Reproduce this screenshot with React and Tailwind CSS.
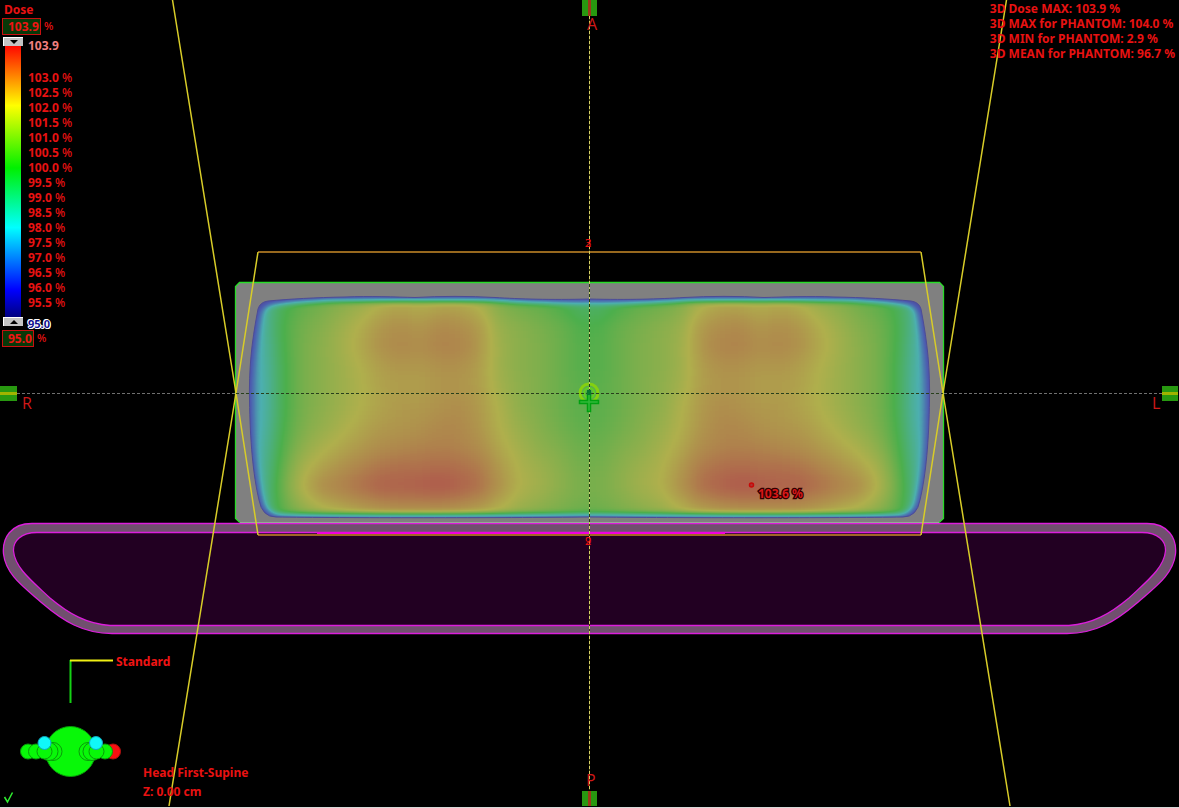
import React, { useState } from "react";

const scaleLabels = [
  "103.0", "102.5", "102.0", "101.5", "101.0", "100.5", "100.0", "99.5",
  "99.0", "98.5", "98.0", "97.5", "97.0", "96.5", "96.0", "95.5",
];

const stats = [
  "3D Dose MAX: 103.9 %",
  "3D MAX for PHANTOM: 104.0 %",
  "3D MIN for PHANTOM: 2.9 %",
  "3D MEAN for PHANTOM: 96.7 %",
];

// Dose in percent, from the lateral edge to the central axis, 20 units apart
const doseRows = [
  [97.8, 99.5, 100.1, 100.4, 100.8, 101.1, 101.4, 101.6, 101.5, 101.6, 101.6, 101.3, 100.6, 100.3, 100.1, 99.9, 99.3],
  [98.0, 99.7, 100.4, 100.8, 101.2, 101.6, 102.1, 102.3, 102.1, 102.3, 102.3, 102.0, 101.1, 100.7, 100.5, 100.1, 99.5],
  [98.0, 99.9, 100.7, 101.1, 101.6, 102.1, 102.6, 102.8, 102.6, 102.9, 102.8, 102.5, 101.5, 101.2, 100.9, 100.6, 100.1],
  [97.9, 99.8, 100.8, 101.2, 101.7, 102.2, 102.7, 102.9, 102.8, 103.0, 103.0, 102.6, 101.6, 101.2, 101.0, 100.6, 100.2],
  [97.8, 99.7, 100.8, 101.2, 101.6, 102.0, 102.4, 102.6, 102.5, 102.7, 102.7, 102.4, 101.6, 101.2, 101.0, 100.6, 100.2],
  [97.7, 99.7, 100.8, 101.2, 101.6, 101.9, 102.3, 102.4, 102.4, 102.6, 102.6, 102.4, 101.7, 101.3, 101.0, 100.6, 100.3],
  [97.7, 99.7, 100.8, 101.2, 101.6, 102.0, 102.3, 102.5, 102.5, 102.7, 102.8, 102.5, 101.9, 101.3, 101.0, 100.6, 100.3],
  [97.8, 99.8, 100.9, 101.4, 101.8, 102.2, 102.5, 102.6, 102.7, 102.9, 102.9, 102.6, 102.0, 101.5, 101.1, 100.7, 100.4],
  [98.0, 100.0, 101.2, 101.8, 102.2, 102.5, 102.8, 102.9, 103.0, 103.1, 103.0, 102.8, 102.2, 101.7, 101.3, 101.0, 100.6],
  [98.1, 100.3, 101.7, 102.3, 102.7, 103.0, 103.3, 103.4, 103.4, 103.5, 103.4, 103.2, 102.5, 101.9, 101.6, 101.2, 100.8],
  [98.2, 100.5, 102.0, 102.8, 103.1, 103.4, 103.7, 103.7, 103.8, 103.9, 103.7, 103.4, 102.7, 102.0, 101.7, 101.3, 100.9],
  [98.2, 100.3, 101.4, 102.0, 102.3, 102.6, 102.8, 102.9, 102.9, 102.9, 102.8, 102.6, 102.1, 101.6, 101.3, 101.0, 100.7],
  [98.0, 99.8, 100.4, 100.7, 101.0, 101.3, 101.5, 101.6, 101.6, 101.6, 101.5, 101.2, 101.0, 100.8, 100.6, 100.4, 100.2],
];

const CELL = 20;
const AXIS = 589.5;

const toGray = (dose) => {
  const level = Math.round(((dose - 95) / 9) * 255);
  return `rgb(${level},${level},${level})`;
};

// Half of the dose grid, the other half is mirrored over the axis
const DoseCells = () => (
  <>
    {doseRows.map((row, r) =>
      row.map((dose, c) => {
        const pad = c === 0 ? CELL : 0;
        return (
          <rect
            key={`${r}-${c}`}
            x={AXIS - (row.length - c) * CELL - pad}
            y={277 + r * CELL}
            width={CELL + pad}
            height={CELL}
            fill={toGray(dose)}
            shapeRendering="crispEdges"
          />
        );
      })
    )}
  </>
);

const Beams = () => (
  <g fill="none" stroke="#d8cc28" strokeWidth="1.5">
    <path d="M172.500 0 L236 393 L258 535" />
    <path d="M258 252 L236 393 L169 806" />
  </g>
);

const mirror = "translate(1179 0) scale(-1 1)";

const doseOutline =
  "M589.500 299 C550 300 520 299 495 297.500 C470 296 440 296 415 297.500 C395 297 370 296 345 297 C315 297.500 290 299 268 301 Q260 302 258 309 C251 345 249 370 249.500 400 C250 440 253 475 259 500 Q262 517 276 517 C340 518 500 518 589.500 517 C679 518 839 518 903 517 Q917 517 920 500 C926 475 929 440 929.500 400 C930 370 928 345 921 309 Q919 302 911 301 C889 299 864 297.500 834 297 C809 296 784 297 764 297.500 C739 296 709 296 684 297.500 C659 299 629 300 589.500 299 Z";

const doseCore =
  "M589.500 302 C550 303 520 301 490 300 L345 300 C315 300 290 302 271 304 Q262 305 260 315 C254 348 252 375 252 400 C252 440 255 475 261 498 Q264 515.500 280 515.500 L899 515.500 Q915 515.500 918 498 C924 475 927 440 927 400 C927 375 925 348 919 315 Q917 305 908 304 C889 302 864 300 834 300 L689 300 C659 301 629 303 589.500 302 Z";

const couchOuter =
  "M32 523.500 H1147 C1168 523.500 1177 538 1175.500 554 C1173 575 1155 587 1137 603 C1116 621 1096 633.500 1067 633.500 H112 C83 633.500 63 621 42 603 C24 587 6 575 3.500 554 C2 538 11 523.500 32 523.500 Z";

const couchInner =
  "M37 532.500 H1142 C1158 532.500 1166 541 1165.500 551 C1164 568 1147 581 1129 598 C1110 614 1092 624 1069 625.500 H110 C87 624 69 614 50 598 C32 581 15 568 13.500 551 C13 541 21 532.500 37 532.500 Z";

const Slice = () => (
  <svg
    viewBox="0 0 1179 808"
    className="block w-full h-auto"
    role="img"
    aria-label="Transversal dose slice"
  >
    <defs>
      <filter id="smooth" x="-10%" y="-10%" width="120%" height="120%" colorInterpolationFilters="sRGB">
        <feGaussianBlur stdDeviation="9" />
      </filter>
      <filter id="falloff" x="-10%" y="-10%" width="120%" height="120%" colorInterpolationFilters="sRGB">
        <feGaussianBlur stdDeviation="4 3" />
      </filter>
      <filter id="colormap" x="0" y="0" width="100%" height="100%" colorInterpolationFilters="sRGB">
        <feComponentTransfer>
          <feFuncR type="table" tableValues="0.3 0.3 0.3 0.3 0.3 0.3 0.5 0.69 0.69 0.69" />
          <feFuncG type="table" tableValues="0.3 0.36 0.5 0.69 0.69 0.69 0.69 0.69 0.52 0.32" />
          <feFuncB type="table" tableValues="0.6 0.69 0.69 0.69 0.5 0.3 0.3 0.3 0.3 0.3" />
        </feComponentTransfer>
      </filter>
      <clipPath id="doseClip">
        <path d={doseOutline} />
      </clipPath>
    </defs>

    {/* Couch */}
    <path d={couchOuter} fill="#70506e" stroke="#dc1edc" strokeWidth="1.300" />
    <path d={couchInner} fill="#220022" stroke="#dc1edc" strokeWidth="1.300" />
    <rect x="317" y="532" width="408" height="2" fill="#f000e0" />

    {/* Phantom */}
    <path d="M239.500 282.500 H939.500 L943.500 286.500 V518.500 L939.500 522.500 H239.500 L235.500 518.500 V286.500 Z" fill="#808080" />
    <path
      d="M240 522.500 L235.500 518.500 V286.500 L239.500 282.500 H939.500 L943.500 286.500 V518.500 L939 522.500"
      fill="none"
      stroke="#28dc28"
      strokeWidth="1.300"
    />
    <path d="M240 522.500 H939" stroke="#98a898" />

    {/* Dose color wash */}
    <g clipPath="url(#doseClip)">
      <g filter="url(#colormap)">
        <g filter="url(#smooth)">
          <DoseCells />
          <g transform={mirror}>
            <DoseCells />
          </g>
        </g>
        <path
          d={`M200 240 H979 V560 H200 Z ${doseCore}`}
          fill="#000"
          fillRule="evenodd"
          filter="url(#falloff)"
        />
      </g>
    </g>
    <path d={doseOutline} fill="none" stroke="#4c4c98" />

    {/* Field borders */}
    <path d="M258 252 H921 M258 535 H921" stroke="#c98a28" strokeWidth="1.500" />
    <Beams />
    <g transform={mirror}>
      <Beams />
    </g>

    {/* Isocenter */}
    <circle cx="589" cy="393" r="9" fill="none" stroke="#84d010" strokeWidth="3" />
    <circle cx="589" cy="393" r="5" fill="none" stroke="#60d020" strokeWidth="2" />

    {/* Axes */}
    <g shapeRendering="crispEdges">
      <path d="M17 393.500 H235 M944 393.500 H1162" stroke="#707070" strokeDasharray="3 2" />
      <path d="M236 393.500 H943" stroke="#28401c" strokeDasharray="3 2" />
      <path d="M589.500 16 V790" stroke="#3c3c08" />
      <path d="M589.500 16 V790" stroke="#d8d068" strokeDasharray="3 2" />
      <path d="M589.500 284 V522" stroke="#c8d070" />
      <path d="M589.500 284 V522" stroke="#203c10" strokeDasharray="3 2" />
    </g>

    <path
      d="M587.500 392.500 h3 v8 h8 v3 h-8 v8 h-3 v-8 h-8 v-3 h8 Z"
      fill="#30b838"
      stroke="#00a010"
      strokeWidth="1.500"
    />
    <path d="M587 390 h4 v5 h-4 Z" fill="#087830" />

    {/* Viewing plane handles */}
    <g shapeRendering="crispEdges">
      <rect x="582" y="0" width="15" height="16" fill="#289810" />
      <rect x="588" y="0" width="3" height="16" fill="#9c3818" />
      <rect x="582" y="791" width="15" height="15" fill="#289810" />
      <rect x="588" y="791" width="3" height="15" fill="#9c3818" />
      <rect x="0" y="386" width="17" height="15" fill="#289810" />
      <rect x="0" y="392" width="17" height="3" fill="#a0b400" />
      <rect x="1162" y="386" width="16" height="15" fill="#289810" />
      <rect x="1162" y="392" width="16" height="3" fill="#a0b400" />
      <rect x="0" y="807" width="1179" height="1" fill="#d8d8d8" />
    </g>

    <g className="font-['Open_Sans',sans-serif] text-[16px] font-normal" fill="#d01818">
      <text x="587" y="30">A</text>
      <text x="586" y="786">P</text>
      <text x="22" y="409">R</text>
      <text x="1152" y="409">L</text>
    </g>
    <g className="font-['Open_Sans',sans-serif] text-[11px] font-normal" fill="#f01010">
      <text x="585" y="247">3</text>
      <text x="585" y="247">2</text>
      <text x="585" y="545">9</text>
      <text x="585" y="545">2</text>
    </g>

    {/* Dose maximum */}
    <circle cx="751.500" cy="485" r="2" fill="#b03030" stroke="#c80808" strokeWidth="1.500" />
    <text
      x="758"
      y="498"
      className="font-['Noto_Sans',sans-serif] text-[12px] font-bold"
      fill="#d81818"
      stroke="#300000"
      strokeWidth="2.500"
      paintOrder="stroke"
    >
      103.6 %
    </text>
  </svg>
);

const DoseInput = ({ label, value, onChange, width }) => (
  <label className="flex items-center gap-[3px] h-[17px]">
    <input
      type="text"
      aria-label={label}
      value={value}
      onChange={(e) => onChange(e.target.value)}
      className={`${width} h-[17px] pl-[5px] bg-[#083808] border border-[#c81010] text-[#f01414] text-[12px]`}
    />
    <span className="font-medium text-[11px]">%</span>
  </label>
);

const DoseScale = () => {
  const [upper, setUpper] = useState("103.9");
  const [lower, setLower] = useState("95.0");

  return (
    <div className="absolute left-0.5 top-0.5 flex flex-col">
      <h2 className="pl-0.5 leading-4">Dose</h2>
      <DoseInput label="Upper dose" value={upper} onChange={setUpper} width="w-[39px]" />
      <div className="flex gap-1 mt-0.5">
        <div className="flex flex-col items-center w-5 h-[289px] ml-px">
          <button
            aria-label="Lower the upper limit"
            className="flex items-center justify-center w-5 h-[9px] bg-[#c4c4c4] border-t border-l border-white"
          >
            <svg viewBox="0 0 8 4" className="w-2 h-1">
              <path d="M0 0 H8 L4 4 Z" fill="#000" />
            </svg>
          </button>
          <div className="w-4 flex-1 bg-[linear-gradient(to_bottom,#ff0800_0%,#ffff00_22%,#00f000_45%,#00ffff_67%,#0000ff_90%,#000080_100%)]" />
          <button
            aria-label="Raise the lower limit"
            className="flex items-center justify-center w-5 h-[9px] bg-[#c4c4c4] border-t border-l border-white"
          >
            <svg viewBox="0 0 8 4" className="w-2 h-1">
              <path d="M0 4 H8 L4 0 Z" fill="#000" />
            </svg>
          </button>
        </div>
        <div className="flex flex-col pl-px h-[289px]">
          <span className="leading-[17px] text-[#f08080]">103.9</span>
          <ul className="mt-4 leading-[15px]">
            {scaleLabels.map((label) => (
              <li key={label}>
                {label} <span className="font-medium">%</span>
              </li>
            ))}
          </ul>
          <span className="mt-2 leading-3 text-[11px] text-[#101090] [text-shadow:1px_0_#fff,-1px_0_#fff,0_1px_#fff,0_-1px_#fff,1px_1px_#fff,-1px_-1px_#fff]">
            95.0
          </span>
        </div>
      </div>
      <div className="mt-1">
        <DoseInput label="Lower dose" value={lower} onChange={setLower} width="w-8" />
      </div>
    </div>
  );
};

const Orientation = () => (
  <div className="absolute left-0 bottom-0 flex items-end">
    <svg width="143" height="156" viewBox="0 652 143 156" className="overflow-visible">
      <path d="M70.500 703 V660" stroke="#14d214" strokeWidth="2" />
      <path d="M70 660.500 H113" stroke="#f0f014" strokeWidth="2" />
      <text x="116" y="666" fill="#f01414">Standard</text>
      <g fill="#08f808" stroke="#0a9a0a">
        <circle cx="113" cy="751.500" r="7.500" fill="#f81010" stroke="#b01010" />
        <circle cx="70.500" cy="751.500" r="25" />
        <circle cx="53" cy="751.500" r="9" />
        <circle cx="49" cy="751.500" r="9" />
        <circle cx="88" cy="751.500" r="9" />
        <circle cx="92" cy="751.500" r="9" />
        <circle cx="28" cy="751.500" r="7.500" />
        <circle cx="36" cy="751.500" r="7.500" />
        <circle cx="44.500" cy="751.500" r="7.500" />
        <circle cx="105" cy="751.500" r="7.500" />
        <circle cx="96.500" cy="751.500" r="7.500" />
        <circle cx="44.500" cy="743" r="6.500" fill="#10f8f8" stroke="#10a8c0" />
        <circle cx="96" cy="743" r="6.500" fill="#10f8f8" stroke="#10a8c0" />
      </g>
      <path d="M4.500 797 L7.500 802 L12.500 792.500" fill="none" stroke="#30f030" strokeWidth="1.500" />
    </svg>
    <div className="pb-[7px] leading-[19px]">
      <p>Head First-Supine</p>
      <p>Z: 0.00 cm</p>
    </div>
  </div>
);

const App = () => {
  return (
    <main className="relative w-full min-h-screen bg-black overflow-hidden font-['Noto_Sans',sans-serif] text-[12px] font-bold text-[#e81212]">
      <Slice />
      <DoseScale />
      <div className="absolute right-1 top-px leading-[15px]">
        {stats.map((line) => (
          <p key={line}>{line}</p>
        ))}
      </div>
      <Orientation />
    </main>
  );
};

export default App;
